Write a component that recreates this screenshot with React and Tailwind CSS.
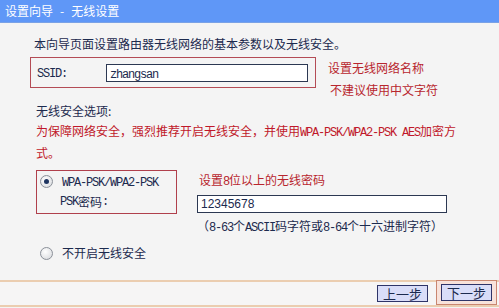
import React from 'react';

// Latin runs in the half-width style of the original (6px per glyph)
const M = ({ children }) => (
  <span className="font-['Liberation_Mono',monospace] tracking-[-1.2px]">{children}</span>
);

const Radio = ({ checked }) => (
  <span className="w-[13px] h-[13px] rounded-full border border-[#8b9099] bg-[radial-gradient(circle_at_40%_35%,#ffffff,#d4d6da)] flex items-center justify-center shrink-0">
    {checked && <span className="w-[5px] h-[5px] rounded-full bg-[#1e3460]" />}
  </span>
);

const App = () => {
  return (
    <div className="w-[499px] h-[308px] bg-[#f4f4f4] flex flex-col text-[12px] text-[#1c2a4e] font-['Noto_Sans_CJK_SC',sans-serif] overflow-hidden">
      {/* 标题栏 */}
      <div className="h-[23px] shrink-0 bg-[#5f97f7] border-b border-[#7aa2e6] text-white text-[12px] leading-[22px] pl-[5px] flex">
        <span>设置向导</span>
        <span className="mx-[7px]">-</span>
        <span>无线设置</span>
      </div>

      <div className="pl-[30px] flex flex-col">
        <p className="mt-[13px] pl-[4px] leading-[16px]">本向导页面设置路由器无线网络的基本参数以及无线安全。</p>

        {/* SSID */}
        <div className="mt-[5px] flex items-start">
          <div className="w-[286px] h-[31px] border border-[#b44c55] flex items-center pl-[6px]">
            <span className="w-[69px]"><M>SSID:</M></span>
            <div className="w-[202px] h-[18px] border border-[#2c3852] bg-white pl-[3px] leading-[16px]">
              <M>zhangsan</M>
            </div>
          </div>
          <div className="ml-[12px] leading-[22px] text-[#b8262e]">
            <p>设置无线网络名称</p>
            <p className="pl-[2px]">不建议使用中文字符</p>
          </div>
        </div>

        <p className="pl-[6px] leading-[20px]">无线安全选项:</p>
        <p className="pl-[6px] leading-[20px] text-[#c0182a]">
          为保障网络安全，强烈推荐开启无线安全，并使用<M>WPA-PSK/WPA2-PSK AES</M>加密方
          <br />
          式。
        </p>

        {/* WPA-PSK */}
        <div className="mt-[7px] ml-[6px] flex items-start">
          <div className="w-[141px] h-[44px] border border-[#b0404c] pl-[3px] flex flex-col">
            <div className="h-[20px] flex items-center gap-[9px]">
              <Radio checked />
              <span className="pt-[2px]"><M>WPA-PSK/WPA2-PSK</M></span>
            </div>
            <div className="h-[22px] flex items-center pl-[20px]">
              <M>PSK</M>密码<M>:</M>
            </div>
          </div>
          <div className="ml-[20px] flex flex-col">
            <p className="pl-[2px] leading-[20px] text-[#b8262e]">设置<M>8</M>位以上的无线密码</p>
            <div className="mt-[3px] w-[250px] h-[18px] border border-[#2c3852] bg-white pl-[3px] leading-[16px] font-['Liberation_Sans',sans-serif]">
              12345678
            </div>
            <p className="mt-[3px] leading-[20px]">
              （<M>8-63</M>个<M>ASCII</M>码字符或<M>8-64</M>个十六进制字符）
            </p>
          </div>
        </div>

        <div className="mt-[5px] ml-[10px] h-[20px] flex items-center gap-[9px]">
          <Radio />
          <span>不开启无线安全</span>
        </div>
      </div>

      {/* 底部按钮 */}
      <div className="mt-auto mb-[1px] h-[27px] border-t-2 border-b-2 border-[#ebcdb0] bg-[#f6f5f5] flex justify-end items-stretch pr-[2px]">
        <div className="self-center w-[51px] h-[17px] mr-[8px] border border-[#2e3468] bg-[#d9ddf8] text-[13px] leading-[15px] text-center">
          上一步
        </div>
        <div className="w-[61px] -mt-[2px] border border-[#c98670] bg-[#f8e2da] flex items-center justify-center">
          <div className="w-[51px] h-[17px] border border-[#2e3468] bg-[#d9ddf8] text-[13px] leading-[15px] text-center">
            下一步
          </div>
        </div>
      </div>
    </div>
  );
};

export default App;
